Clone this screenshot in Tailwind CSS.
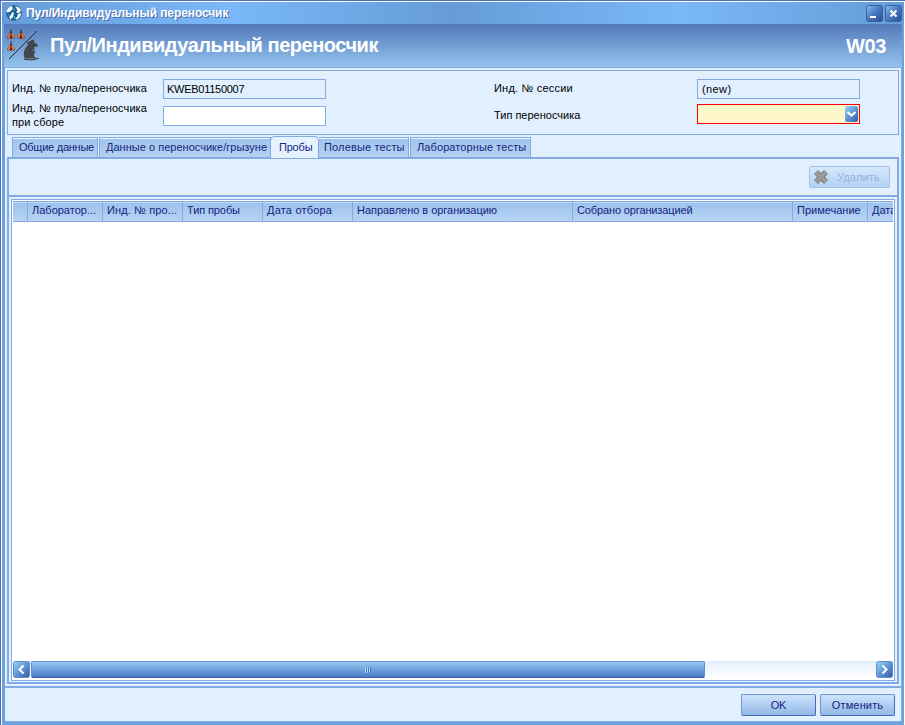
<!DOCTYPE html>
<html lang="ru"><head><meta charset="utf-8"><title>Пул/Индивидуальный переносчик</title>
<script src="https://cdn.jsdelivr.net/npm/@tailwindcss/browser@4"></script></head>
<body class="w-[905px] h-[725px] overflow-hidden font-['Liberation_Sans',Arial,sans-serif] text-[11px] leading-[14px] text-black whitespace-nowrap">
<div class="w-[905px] h-[725px] border-t border-l border-[#4a6fb8] bg-white pt-px pl-px">
<div class="w-[902px] h-[723px] bg-[#6ba1dd] flex flex-col">
  <header class="h-[22px] shrink-0 flex items-center pl-[4px] pr-[2px] bg-[linear-gradient(90deg,#659cd8_0%,#7ab8f8_25%,#659cd8_50%,#7ab8f8_75%,#659cd8_100%)]">
    <svg class="w-4 h-4" viewBox="0 0 16 16"><circle cx="8" cy="8" r="7.7" fill="#135f90"/><path d="M.5 7C1 3.500 3 1.500 5.500 1L7 3 5 6 2 7.500zM9 1.500c3 0 5 1.500 6 4L13 8l-3-.5L11.500 5zM6 7l2 1-1 4-2.500 2.500L3 12l2-2zM12 9l3-1c0 3-1.500 5-4 6.500L9 14l2-2z" fill="#fff"/><path d="M8 3v3M2 10h2M8.500 11v3" stroke="#4fa5cf"/></svg>
    <h1 class="ml-[4px] text-[12px] font-bold text-white tracking-[-0.09px] [text-shadow:1px_1px_0_#4b69ac]">Пул/Индивидуальный переносчик</h1>
    <div class="ml-auto flex gap-[2px]">
      <svg class="w-[17px] h-[17px]" viewBox="0 0 17 17"><defs><linearGradient id="b" x2="1" y2="1"><stop stop-color="#83c3f0"/><stop offset=".5" stop-color="#4776bd"/><stop offset="1" stop-color="#294d97"/></linearGradient><linearGradient id="c" x2="1" y2="1"><stop stop-color="#9bd5f8"/><stop offset=".55" stop-color="#5c90d0"/><stop offset="1" stop-color="#3358a5"/></linearGradient></defs><rect x=".5" y=".5" width="16" height="16" rx="2" fill="url(#b)" stroke="#3561a5"/><path d="M4 12h6" stroke="#fff" stroke-width="2"/></svg>
      <svg class="w-[17px] h-[17px]" viewBox="0 0 17 17"><rect x=".5" y=".5" width="16" height="16" rx="2" fill="url(#b)" stroke="#3561a5"/><path d="m5.500 5.500 6 6m0-6-6 6" stroke="#fff" stroke-width="2"/></svg>
    </div>
  </header>
  <div class="h-[43px] shrink-0 ml-[2px] mr-[2px] flex items-center bg-linear-to-b from-[#5479b9] to-[#94c4ee]">
    <svg class="ml-[2px] w-9 h-9" viewBox="0 0 36 36"><defs><g id="m"><path d="M4 0v4" stroke="#3b2930"/><path d="M4 2l1.500 2L8 8.500 7 10 5 9 4 10.500 3 9 1 10 0 8.500 2.500 4z" fill="#5a2c30"/><path d="M3 4.500 1.200 9.200M5 4.500l1.800 4.700" stroke="#f58631" stroke-width="1.700"/></g></defs><use href="#m" x="1" y="1"/><use href="#m" x="11" y="1"/><use href="#m" x="1" y="13"/><path d="M3 31 31 3" stroke="#242833"/><path d="M21 14l3-.5 2-2 2 .5.500 2.500 3.500 2.500-.5 1.500-3.500.5 1 4.500-1 4 2.500 3H19c-2.500-4-1-10 3-13.500z" fill="#424549"/><path d="M18 31c5 1.200 11 1.200 15-1" stroke="#303338" fill="none"/><path d="m26 22 3 1m-2 5 2 1" stroke="#777b80"/></svg>
    <h2 class="ml-[8px] -mt-px text-[20px] leading-6 font-bold text-white tracking-[-0.47px]">Пул/Индивидуальный переносчик</h2>
    <span class="ml-auto mr-[16px] text-[20px] leading-6 font-bold text-white tracking-[-0.4px]">W03</span>
  </div>
  <main class="w-[897px] h-[655px] shrink-0 ml-[3px] bg-[#e1efff] border-t border-r border-b border-[#83abe3] flex flex-col text-[#000]">
    <section class="ml-[2px] mt-[2px] w-[892px] h-[65px] shrink-0 border border-[#83abe3] flex">
      <div class="w-[151px] pl-[4px] pt-[10px] tracking-[0.08px]"><p>Инд. № пула/переносчика</p><p class="mt-[6px]">Инд. № пула/переносчика<br>при сборе</p></div>
      <div class="pl-[4px] pt-[8px]"><div class="w-[163px] h-[20px] border border-[#83abe3] pl-[3px] leading-[19px] tracking-[-0.27px]">KWEB01150007</div><div class="mt-[7px] w-[163px] h-[20px] border border-[#83abe3] bg-white"></div></div>
      <div class="w-[203px] ml-[168px] pt-[10px]"><p class="tracking-[0.2px]">Инд. № сессии</p><p class="mt-[13px]">Тип переносчика</p></div>
      <div class="pt-[8px]"><div class="w-[163px] h-[20px] border border-[#83abe3] pl-[4px] leading-[19px] tracking-[0.4px]">(new)</div>
        <div class="mt-[5px] w-[163px] h-[20px] border border-[#ff0000] bg-[#fff7cc] flex justify-end p-px"><svg class="w-[13px] h-[16px] shrink-0" viewBox="0 0 13 16"><rect width="13" height="16" rx="2" fill="url(#c)"/><path d="m2.500 6 4 3.500 4-3.500" fill="none" stroke="#fff" stroke-width="2.200"/></svg></div></div>
    </section>
    <nav class="h-[22px] shrink-0 ml-[7px] pt-[2px] flex items-end text-[#14237f]">
      <div class="w-[86px] h-[20px] border border-b-0 border-[#83abe3] bg-linear-to-b from-[#a0c4ed] to-[#b4d1f0] shadow-[inset_0_1px_#eef7ff] pl-[6px] leading-[19px] tracking-[-0.25px]">Общие данные</div>
      <div class="ml-px w-[172px] h-[20px] border border-b-0 border-[#83abe3] bg-linear-to-b from-[#a0c4ed] to-[#b4d1f0] shadow-[inset_0_1px_#eef7ff] pl-[6px] leading-[19px] tracking-[0.02px]">Данные о переносчике/грызуне</div>
      <div class="w-[49px] h-[22px] -ml-px -mb-px z-10 border border-b-0 border-[#83abe3] rounded-t-[5px] bg-[#e6f3ff] pl-[8px] leading-[20px] tracking-[-0.2px]">Пробы</div>
      <div class="w-[90px] h-[20px] border border-l-0 border-b-0 border-[#83abe3] bg-linear-to-b from-[#a0c4ed] to-[#b4d1f0] shadow-[inset_0_1px_#eef7ff] pl-[5px] leading-[19px] tracking-[0.15px]">Полевые тесты</div>
      <div class="ml-px w-[121px] h-[20px] border border-b-0 border-[#83abe3] bg-linear-to-b from-[#a0c4ed] to-[#b4d1f0] shadow-[inset_0_1px_#eef7ff] pl-[6px] leading-[19px] tracking-[0.1px]">Лабораторные тесты</div>
    </nav>
    <section class="ml-[2px] w-[892px] h-[527px] shrink-0 border-2 border-[#83abe3] flex flex-col">
      <div class="h-[38px] shrink-0 border-b-2 border-[#83abe3] flex justify-end pt-[7px] pr-[7px]"><button class="h-[22px] w-[81px] border border-[#a1c1e9] rounded-[2px] bg-linear-to-b from-[#d5e8fc] to-[#b4d2f3] flex items-center text-[#93b3e4]"><svg class="ml-[3px] w-4 h-4" viewBox="0 0 16 16"><path d="m3 3 10 10m0-10L3 13" stroke="#777b7d" stroke-width="5.400"/><path d="m3 3 10 10m0-10L3 13" stroke="#9b9b98" stroke-width="3.600"/></svg><span class="ml-[8px] tracking-[0.1px]">Удалить</span></button></div>
      <div class="ml-[2px] mt-[2px] w-[884px] h-[482px] border border-[#83abe3] bg-white p-px flex flex-col">
        <div class="w-[880px] h-[21px] shrink-0 overflow-hidden border-t border-b border-[#83abe3] bg-linear-to-b from-[#9cc2ed] to-[#b7d3f3] shadow-[inset_0_1px_#c5dcf6] flex text-[#14237f] leading-[17px] [&>span]:shrink-0 [&>span]:border-r [&>span]:border-[#83abe3] [&>span]:pl-[4px]">
          <span class="w-[15px]"></span><span class="w-[75px]">Лаборатор...</span><span class="w-[80px] tracking-[0.12px]">Инд. № про...</span><span class="w-[80px] tracking-[-0.1px]">Тип пробы</span><span class="w-[90px] tracking-[0.2px]">Дата отбора</span><span class="w-[220px] tracking-[-0.03px]">Направлено в организацию</span><span class="w-[220px] tracking-[-0.13px]">Собрано организацией</span><span class="w-[75px]">Примечание</span><span class="w-[75px]">Дата</span>
        </div>
        <div class="grow"></div>
        <div class="h-[17px] mb-px flex gap-px bg-linear-to-b from-[#e1efff] to-white"><svg class="w-[17px] h-[17px]" viewBox="0 0 17 17"><rect x=".5" y=".5" width="16" height="16" rx="2" fill="url(#c)" stroke="#5b8bd0"/><path d="M10.500 4.500 6.500 8.500l4 4" stroke="#fff" stroke-width="2" fill="none"/></svg>
          <div class="w-[674px] h-[17px] rounded-[2px] border border-[#5e8fd2] border-b-[#3c5ca8] bg-linear-to-b from-[#97c9f2] to-[#4a7cc8] flex items-center justify-center"><i class="w-px h-[6px] bg-[#b4d9fa]"></i><i class="w-px h-[6px] bg-[#4a76c0]"></i><i class="w-px h-[6px] bg-[#b4d9fa]"></i><i class="w-px h-[6px] bg-[#4a76c0]"></i><i class="w-px h-[6px] bg-[#b4d9fa]"></i><i class="w-px h-[6px] bg-[#4a76c0]"></i></div>
          <svg class="ml-auto w-[17px] h-[17px]" viewBox="0 0 17 17"><rect x=".5" y=".5" width="16" height="16" rx="2" fill="url(#c)" stroke="#5b8bd0"/><path d="m6.500 4.500 4 4-4 4" stroke="#fff" stroke-width="2" fill="none"/></svg></div>
      </div>
    </section>
    <footer class="mt-[2px] h-[36px] border-t-2 border-[#83abe3] flex justify-end gap-[4px] pr-[6px] pt-[6px] text-[#14237f]">
      <button class="w-[75px] h-[22px] rounded-[2px] border border-[#6f98d8] border-r-[#4868b6] border-b-[#4868b6] bg-linear-to-b from-[#cfe4fc] to-[#91b8e6] tracking-[-0.3px]">OK</button><button class="w-[75px] h-[22px] rounded-[2px] border border-[#6f98d8] border-r-[#4868b6] border-b-[#4868b6] bg-linear-to-b from-[#cfe4fc] to-[#91b8e6] tracking-[0.15px]">Отменить</button>
    </footer>
  </main>
</div></div></body></html>
